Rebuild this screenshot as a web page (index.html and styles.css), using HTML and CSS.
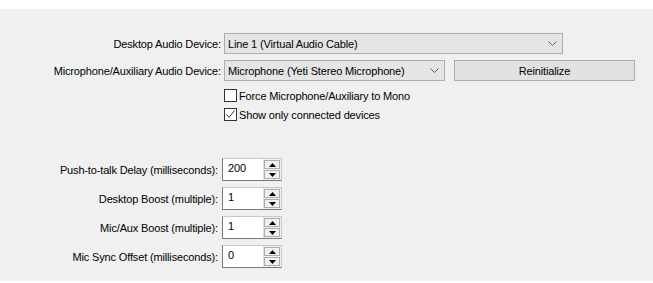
FILE: index.html
```html
<!DOCTYPE html>
<html>
<head>
<meta charset="utf-8">
<link rel="stylesheet" href="styles.css">
</head>
<body>
<div class="topband"></div>
<div class="panel">
  <div class="devices">
    <div class="row">
      <label class="lbl">Desktop Audio Device:</label>
      <div class="combo wide"><span>Line 1 (Virtual Audio Cable)</span>
        <svg class="chev" width="9" height="5" viewBox="0 0 9 5"><path d="M0.5 0.5 L4.5 4.5 L8.5 0.5" fill="none" stroke="#606060" stroke-width="1"/></svg>
      </div>
    </div>
    <div class="row">
      <label class="lbl">Microphone/Auxiliary Audio Device:</label>
      <div class="combo mic"><span>Microphone (Yeti Stereo Microphone)</span>
        <svg class="chev" width="9" height="5" viewBox="0 0 9 5"><path d="M0.5 0.5 L4.5 4.5 L8.5 0.5" fill="none" stroke="#606060" stroke-width="1"/></svg>
      </div>
      <div class="button">Reinitialize</div>
    </div>
    <div class="checkrow first">
      <div class="lbl"></div>
      <span class="box"></span><span class="ctext">Force Microphone/Auxiliary to Mono</span>
    </div>
    <div class="checkrow">
      <div class="lbl"></div>
      <span class="box"><svg width="11" height="11" viewBox="0 0 11 11"><path d="M1.5 5.5 L4 8.5 L9.5 1.5" fill="none" stroke="#333" stroke-width="1"/></svg></span><span class="ctext">Show only connected devices</span>
    </div>
  </div>
  <div class="spins">
    <div class="srow">
      <label class="slbl">Push-to-talk Delay (milliseconds):</label>
      <div class="spin"><span class="val">200</span><div class="arrows"><div class="arr"><svg width="7" height="4" viewBox="0 0 7 4"><path d="M3.5 0 L7 4 L0 4 Z" fill="#000"/></svg></div><div class="arr"><svg width="7" height="4" viewBox="0 0 7 4"><path d="M0 0 L7 0 L3.5 4 Z" fill="#000"/></svg></div></div></div>
    </div>
    <div class="srow">
      <label class="slbl">Desktop Boost (multiple):</label>
      <div class="spin"><span class="val">1</span><div class="arrows"><div class="arr"><svg width="7" height="4" viewBox="0 0 7 4"><path d="M3.5 0 L7 4 L0 4 Z" fill="#000"/></svg></div><div class="arr"><svg width="7" height="4" viewBox="0 0 7 4"><path d="M0 0 L7 0 L3.5 4 Z" fill="#000"/></svg></div></div></div>
    </div>
    <div class="srow">
      <label class="slbl">Mic/Aux Boost (multiple):</label>
      <div class="spin"><span class="val">1</span><div class="arrows"><div class="arr"><svg width="7" height="4" viewBox="0 0 7 4"><path d="M3.5 0 L7 4 L0 4 Z" fill="#000"/></svg></div><div class="arr"><svg width="7" height="4" viewBox="0 0 7 4"><path d="M0 0 L7 0 L3.5 4 Z" fill="#000"/></svg></div></div></div>
    </div>
    <div class="srow">
      <label class="slbl">Mic Sync Offset (milliseconds):</label>
      <div class="spin"><span class="val">0</span><div class="arrows"><div class="arr"><svg width="7" height="4" viewBox="0 0 7 4"><path d="M3.5 0 L7 4 L0 4 Z" fill="#000"/></svg></div><div class="arr"><svg width="7" height="4" viewBox="0 0 7 4"><path d="M0 0 L7 0 L3.5 4 Z" fill="#000"/></svg></div></div></div>
    </div>
  </div>
</div>
</body>
</html>
```
FILE: styles.css
```css
* { box-sizing: border-box; }
html, body { margin: 0; padding: 0; background: #ffffff; }
body {
  width: 653px;
  height: 283px;
  overflow: hidden;
  font-family: "Liberation Sans", Arial, sans-serif;
  font-size: 11px;
  letter-spacing: -0.15px;
  color: #000;
}
.topband { height: 9px; background: #fff; }
.panel {
  height: 272px;
  background: #f0f0f0;
  padding-top: 24px;
}
.devices { display: flex; flex-direction: column; }
.row { display: flex; align-items: center; height: 21px; margin-bottom: 6px; }
.lbl { width: 221px; text-align: right; margin-right: 3px; flex: none; }
.combo {
  height: 21px;
  background: #e5e5e5;
  border: 1px solid #adadad;
  display: flex;
  align-items: center;
  padding-left: 3px;
  justify-content: space-between;
  padding-right: 5px;
}
.combo.wide { width: 339px; }
.combo.mic { width: 221px; }
.chev { flex: none; }
.button {
  margin-left: 9px;
  width: 181px;
  height: 21px;
  background: #e1e1e1;
  border: 1px solid #adadad;
  display: flex;
  align-items: center;
  justify-content: center;
}
.checkrow { display: flex; align-items: center; height: 19px; }
.checkrow.first { margin-top: -1px; }
.box {
  width: 13px; height: 13px;
  background: #fff;
  border: 1px solid #333;
  flex: none;
  display: flex;
}
.ctext { margin-left: 2px; }
.spins { margin-top: 34px; display: flex; flex-direction: column; gap: 6px; }
.srow { display: flex; align-items: center; height: 23px; }
.slbl { width: 218px; text-align: right; margin-right: 4px; flex: none; }
.spin {
  width: 60px; height: 23px;
  display: flex;
  background: #fff;
  border: 1px solid #7a7a7a;
  border-right-color: #c8c8c8;
  border-top-color: #c8c8c8;
}
.val { flex: 1; padding-left: 5px; padding-top: 3px; }
.arrows {
  width: 18px;
  display: flex; flex-direction: column;
  padding: 1px 1px 1px 0;
  gap: 1px;
  background: #f0f0f0;
  border-left: 1px solid #e0e0e0;
}
.arr {
  flex: 1;
  border: 1px solid #adadad;
  background: #f0f0f0;
  display: flex; align-items: center; justify-content: center;
}
```
